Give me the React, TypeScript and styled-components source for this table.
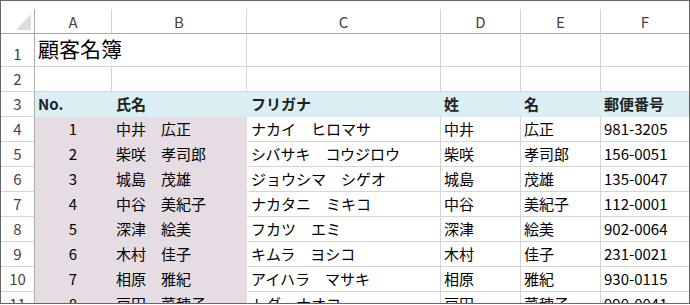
import React from "react";
import styled, { createGlobalStyle } from "styled-components";

const GlobalStyle = createGlobalStyle`
  html, body { margin: 0; padding: 0; background: #ffffff; }
  body { font-family: "Noto Sans CJK JP", "Noto Sans", sans-serif; }
`;

const GRID = "#d4d4d4";
const HEAD_LINE = "#ababab";
const CYAN = "#daeef3";
const PINK = "#e5dde3";
const COLS = "34px 77px 135px 194px 80px 80px 88px";

const Frame = styled.div`
  width: 690px;
  height: 304px;
  box-sizing: border-box;
  border: 1px solid #666666;
  overflow: hidden;
  background: #ffffff;
`;

const TopGap = styled.div`
  height: 8px;
`;

const Row = styled.div<{ $h: number }>`
  display: grid;
  grid-template-columns: ${COLS};
  height: ${(p) => p.$h}px;
`;

const Corner = styled.div`
  box-sizing: border-box;
  border-right: 1px solid ${HEAD_LINE};
  border-bottom: 1px solid ${HEAD_LINE};
  display: flex;
  align-items: flex-end;
  justify-content: flex-end;
  padding: 0 3px 3px 0;
`;

const CornerMark = styled.span`
  width: 0;
  height: 0;
  border-left: 15px solid transparent;
  border-bottom: 16px solid #dddddd;
`;

const ColHead = styled.div<{ $last?: boolean }>`
  box-sizing: border-box;
  border-right: ${(p) => (p.$last ? "none" : `1px solid ${GRID}`)};
  border-bottom: 1px solid ${HEAD_LINE};
  display: flex;
  align-items: center;
  justify-content: center;
  font-size: 15px;
  color: #444444;
  padding-top: 1px;
`;

const RowHead = styled.div`
  box-sizing: border-box;
  border-right: 1px solid ${HEAD_LINE};
  border-bottom: 1px solid ${GRID};
  display: flex;
  align-items: flex-end;
  justify-content: center;
  font-size: 15px;
  line-height: 20px;
  padding-bottom: 2px;
  color: #444444;
`;

const Cell = styled.div<{
  $fill?: string;
  $center?: boolean;
  $bold?: boolean;
  $big?: boolean;
  $pad?: number;
  $last?: boolean;
  $span?: number;
}>`
  box-sizing: border-box;
  grid-column: span ${(p) => p.$span ?? 1};
  background: ${(p) => p.$fill ?? "#ffffff"};
  border-right: ${(p) => (p.$last ? "none" : `1px solid ${p.$fill ?? GRID}`)};
  border-bottom: 1px solid ${(p) => p.$fill ?? GRID};
  display: flex;
  align-items: flex-end;
  justify-content: ${(p) => (p.$center ? "center" : "flex-start")};
  padding-left: ${(p) => (p.$center ? 0 : p.$pad ?? 3)}px;
  padding-bottom: ${(p) => (p.$big ? 5 : 2)}px;
  font-size: ${(p) => (p.$big ? 21 : 15)}px;
  line-height: ${(p) => (p.$big ? 26 : 20)}px;
  font-weight: ${(p) => (p.$bold ? 700 : 400)};
  color: ${(p) => (p.$bold ? "#222222" : "#000000")};
  white-space: nowrap;
  overflow: hidden;
`;

type Person = {
  no: number;
  name: string;
  kana: string;
  sei: string;
  mei: string;
  zip: string;
};

const people: Person[] = [
  { no: 1, name: "中井　広正", kana: "ナカイ　ヒロマサ", sei: "中井", mei: "広正", zip: "981-3205" },
  { no: 2, name: "柴咲　孝司郎", kana: "シバサキ　コウジロウ", sei: "柴咲", mei: "孝司郎", zip: "156-0051" },
  { no: 3, name: "城島　茂雄", kana: "ジョウシマ　シゲオ", sei: "城島", mei: "茂雄", zip: "135-0047" },
  { no: 4, name: "中谷　美紀子", kana: "ナカタニ　ミキコ", sei: "中谷", mei: "美紀子", zip: "112-0001" },
  { no: 5, name: "深津　絵美", kana: "フカツ　エミ", sei: "深津", mei: "絵美", zip: "902-0064" },
  { no: 6, name: "木村　佳子", kana: "キムラ　ヨシコ", sei: "木村", mei: "佳子", zip: "231-0021" },
  { no: 7, name: "相原　雅紀", kana: "アイハラ　マサキ", sei: "相原", mei: "雅紀", zip: "930-0115" },
  { no: 8, name: "戸田　菜穂子", kana: "トダ　ナオコ", sei: "戸田", mei: "菜穂子", zip: "990-0041" },
];

const letters = ["A", "B", "C", "D", "E", "F"];

export default function App() {
  return (
    <>
      <GlobalStyle />
      <Frame>
        <TopGap />
        <Row $h={25}>
          <Corner>
            <CornerMark />
          </Corner>
          {letters.map((l, i) => (
            <ColHead key={l} $last={i === letters.length - 1}>
              {l}
            </ColHead>
          ))}
        </Row>
        <Row $h={33}>
          <RowHead>1</RowHead>
          <Cell $big $span={2}>顧客名簿</Cell>
          <Cell />
          <Cell />
          <Cell />
          <Cell $last />
        </Row>
        <Row $h={25}>
          <RowHead>2</RowHead>
          <Cell />
          <Cell />
          <Cell />
          <Cell />
          <Cell />
          <Cell $last />
        </Row>
        <Row $h={25}>
          <RowHead>3</RowHead>
          <Cell $fill={CYAN} $bold>No.</Cell>
          <Cell $fill={CYAN} $bold $pad={4}>氏名</Cell>
          <Cell $fill={CYAN} $bold $pad={4}>フリガナ</Cell>
          <Cell $fill={CYAN} $bold>姓</Cell>
          <Cell $fill={CYAN} $bold>名</Cell>
          <Cell $fill={CYAN} $bold $last>郵便番号</Cell>
        </Row>
        {people.map((p, i) => (
          <Row $h={25} key={p.no}>
            <RowHead>{i + 4}</RowHead>
            <Cell $fill={PINK} $center>{p.no}</Cell>
            <Cell $fill={PINK} $pad={4}>{p.name}</Cell>
            <Cell $pad={4}>{p.kana}</Cell>
            <Cell>{p.sei}</Cell>
            <Cell>{p.mei}</Cell>
            <Cell $last>{p.zip}</Cell>
          </Row>
        ))}
      </Frame>
    </>
  );
}
